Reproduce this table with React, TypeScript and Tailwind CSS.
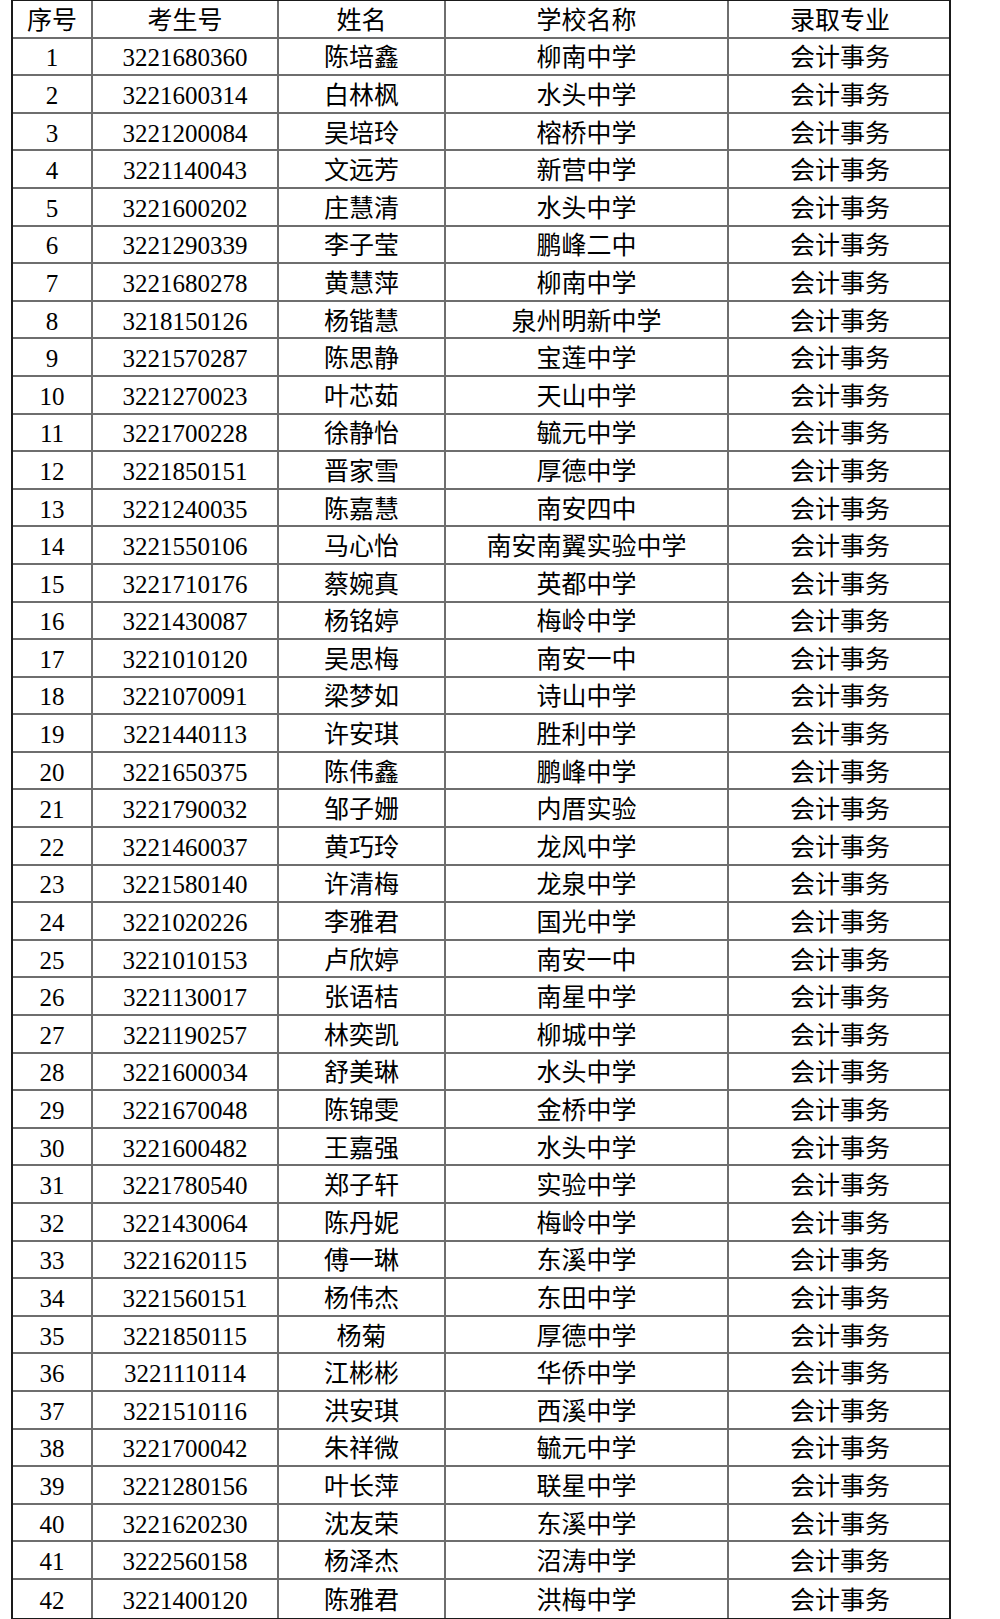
const rows: [string, string, string][] = [
  ['3221680360', '陈培鑫', '柳南中学'],
  ['3221600314', '白林枫', '水头中学'],
  ['3221200084', '吴培玲', '榕桥中学'],
  ['3221140043', '文远芳', '新营中学'],
  ['3221600202', '庄慧清', '水头中学'],
  ['3221290339', '李子莹', '鹏峰二中'],
  ['3221680278', '黄慧萍', '柳南中学'],
  ['3218150126', '杨锴慧', '泉州明新中学'],
  ['3221570287', '陈思静', '宝莲中学'],
  ['3221270023', '叶芯茹', '天山中学'],
  ['3221700228', '徐静怡', '毓元中学'],
  ['3221850151', '晋家雪', '厚德中学'],
  ['3221240035', '陈嘉慧', '南安四中'],
  ['3221550106', '马心怡', '南安南翼实验中学'],
  ['3221710176', '蔡婉真', '英都中学'],
  ['3221430087', '杨铭婷', '梅岭中学'],
  ['3221010120', '吴思梅', '南安一中'],
  ['3221070091', '梁梦如', '诗山中学'],
  ['3221440113', '许安琪', '胜利中学'],
  ['3221650375', '陈伟鑫', '鹏峰中学'],
  ['3221790032', '邹子姗', '内厝实验'],
  ['3221460037', '黄巧玲', '龙风中学'],
  ['3221580140', '许清梅', '龙泉中学'],
  ['3221020226', '李雅君', '国光中学'],
  ['3221010153', '卢欣婷', '南安一中'],
  ['3221130017', '张语桔', '南星中学'],
  ['3221190257', '林奕凯', '柳城中学'],
  ['3221600034', '舒美琳', '水头中学'],
  ['3221670048', '陈锦雯', '金桥中学'],
  ['3221600482', '王嘉强', '水头中学'],
  ['3221780540', '郑子轩', '实验中学'],
  ['3221430064', '陈丹妮', '梅岭中学'],
  ['3221620115', '傅一琳', '东溪中学'],
  ['3221560151', '杨伟杰', '东田中学'],
  ['3221850115', '杨菊', '厚德中学'],
  ['3221110114', '江彬彬', '华侨中学'],
  ['3221510116', '洪安琪', '西溪中学'],
  ['3221700042', '朱祥微', '毓元中学'],
  ['3221280156', '叶长萍', '联星中学'],
  ['3221620230', '沈友荣', '东溪中学'],
  ['3222560158', '杨泽杰', '沼涛中学'],
  ['3221400120', '陈雅君', '洪梅中学'],
];

function Row({ cells, last }: { cells: string[]; last?: boolean }) {
  return (
    <div
      className={`grid grid-cols-[80px_186px_167px_283px_222px] h-[37.6px] ${
        last ? '' : 'border-b-2 border-[#6e6e6e]'
      }`}
    >
      {cells.map((c, i) => (
        <div
          key={i}
          className={`flex items-center justify-center leading-none pt-[3px] ${
            i < 4 ? 'border-r-2 border-[#6e6e6e]' : ''
          }`}
        >
          {c}
        </div>
      ))}
    </div>
  );
}

export default function App() {
  return (
    <div className="min-h-screen bg-white pl-[11px] text-black text-[25px] [font-family:'Liberation_Serif','Noto_Sans_CJK_SC',serif]">
      <div className="w-[940px] border-x-2 border-y-[1.5px] border-[#1a1a1a]">
        <Row cells={['序号', '考生号', '姓名', '学校名称', '录取专业']} />
        {rows.map(([id, name, school], i) => (
          <Row
            key={id}
            cells={[String(i + 1), id, name, school, '会计事务']}
            last={i === rows.length - 1}
          />
        ))}
      </div>
    </div>
  );
}
